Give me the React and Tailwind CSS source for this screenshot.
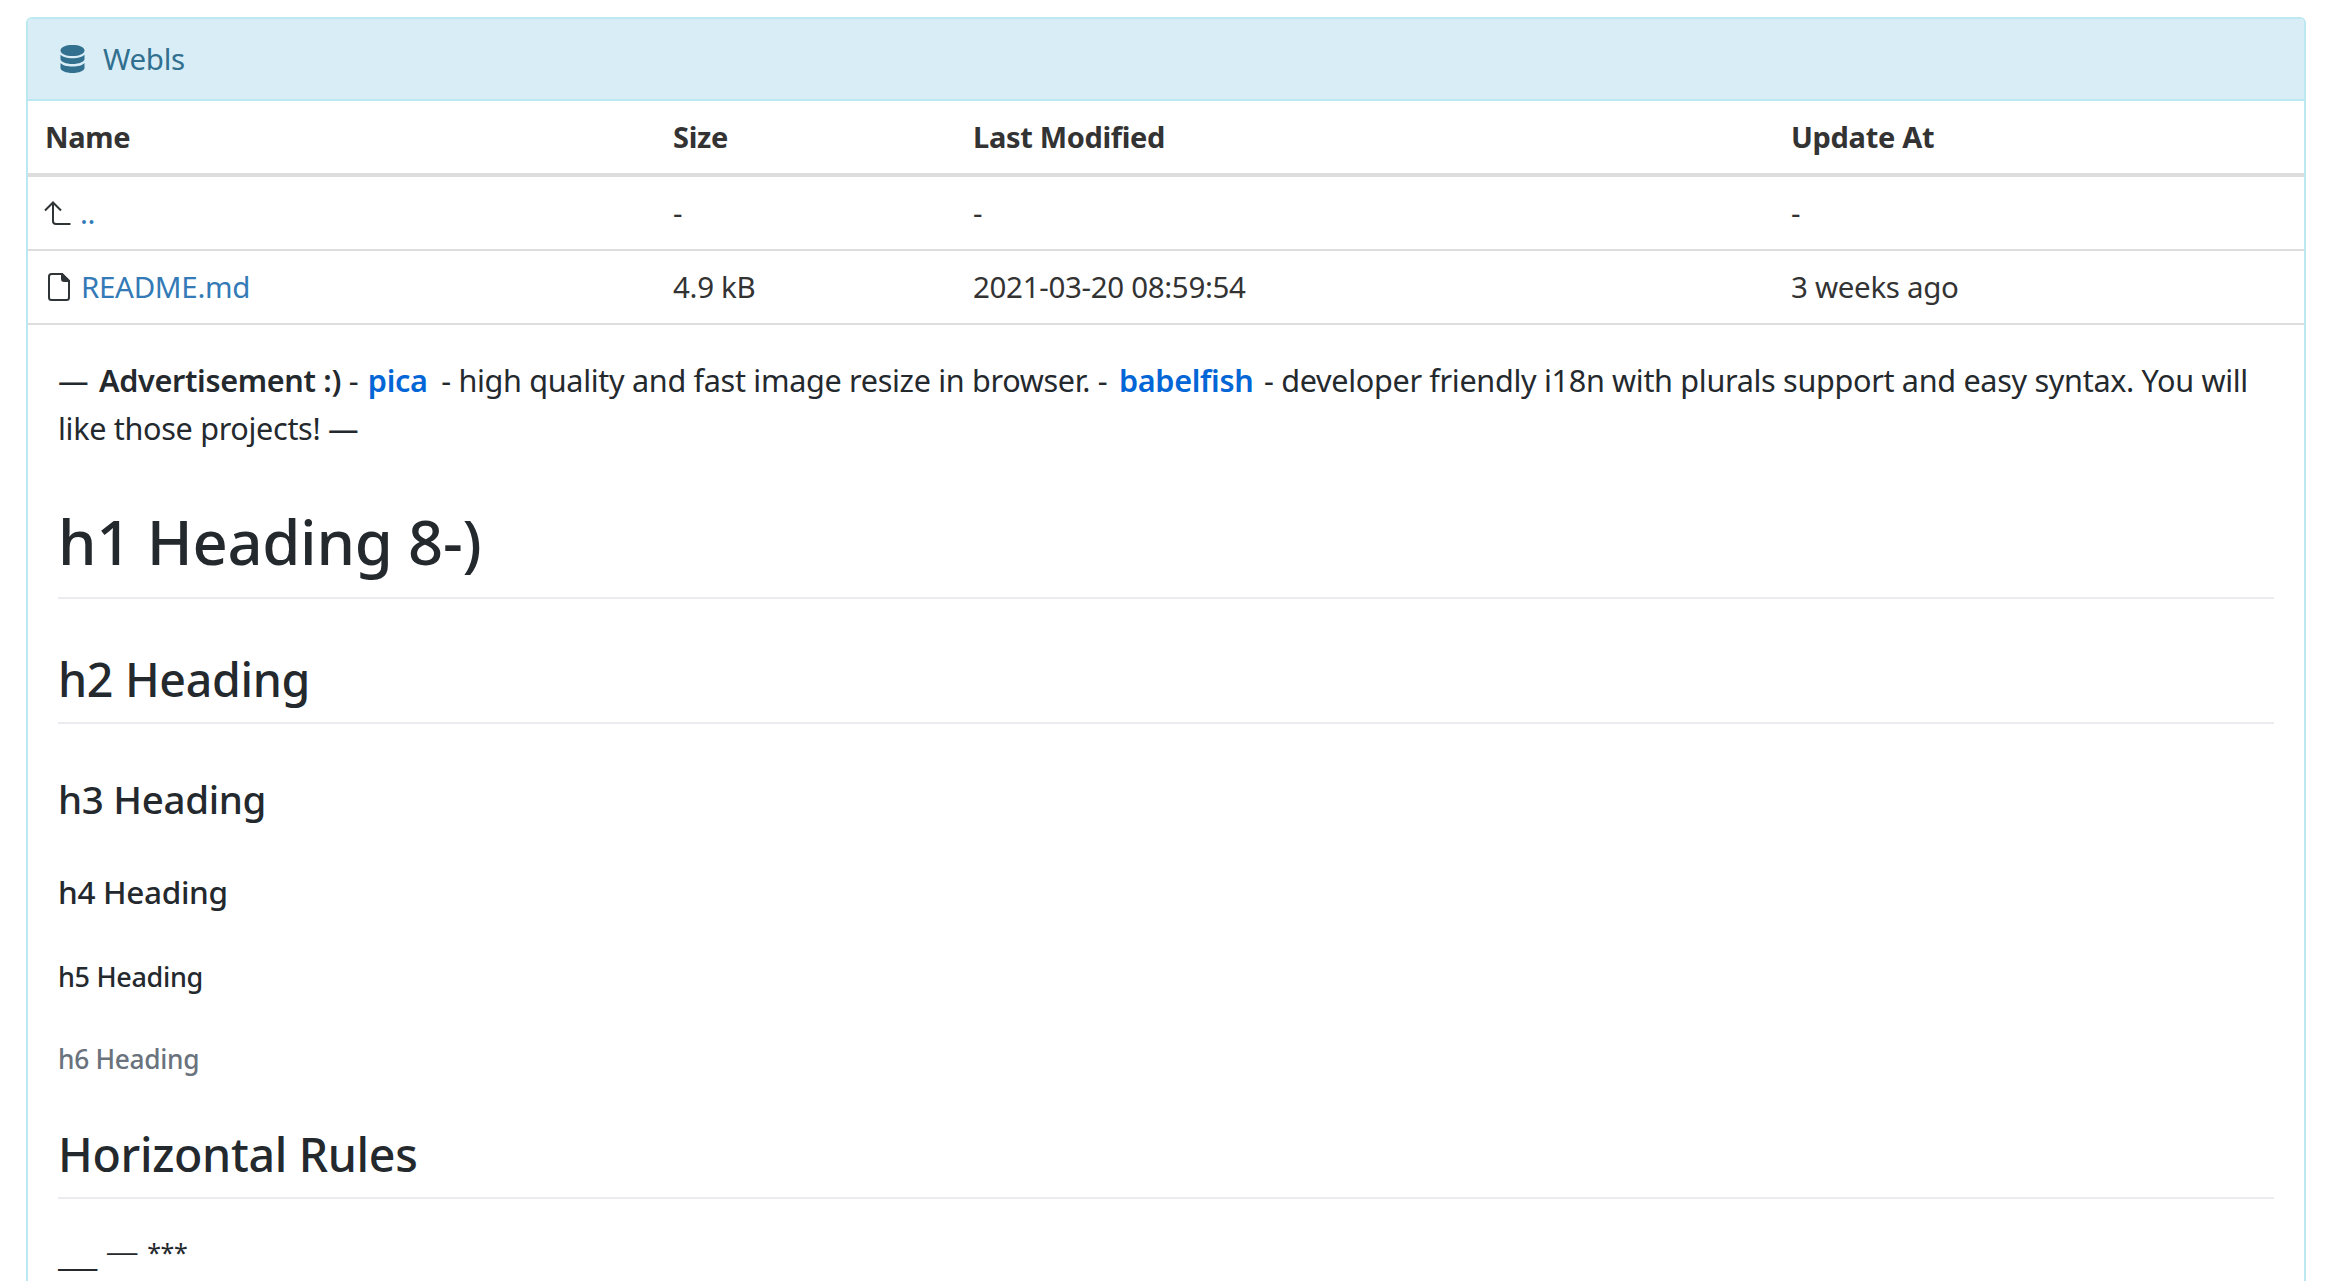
const F = { fontFamily: '"Noto Sans", sans-serif' };

function Db() {
  return (
    <svg width="25" height="28" viewBox="0 0 25 28" fill="#31708f">
      <path d="M12.500 0C19 0 24.500 2 24.500 5.500S19 11 12.500 11 .5 9 .5 5.500 6 0 12.500 0Z" />
      <path d="M.5 9.500C2.500 12 7 13.200 12.500 13.200S22.500 12 24.500 9.500V14c0 2.800-5.500 5-12 5S.5 16.800.5 14Z" />
      <path d="M.5 18C2.500 20.500 7 21.500 12.500 21.500S22.500 20.500 24.500 18v5c0 2.800-5.500 5-12 5S.5 25.800.5 23Z" />
    </svg>
  );
}
function Up() {
  return (
    <svg width="27" height="24" viewBox="0 0 27 24" fill="none" stroke="#2f3437" strokeWidth="2">
      <path d="M1 9.500 9 1.500 17 9.500" />
      <path d="M9 2V20Q9 23 12 23H26.500" />
    </svg>
  );
}
function FileIco() {
  return (
    <svg width="22" height="28" viewBox="0 0 22 28" fill="none" stroke="#2f3437" strokeWidth="2">
      <path d="M3.500 1H14L21 8V24.500Q21 27 18.500 27H3.500Q1 27 1 24.500V3.500Q1 1 3.500 1Z" />
      <path d="M14 1 21 8H16Q14 8 14 6Z" fill="#2f3437" />
    </svg>
  );
}
const colClass = "grid grid-cols-[628px_300px_818px_1fr]";
function Row({ cells, className }) {
  return (
    <div className={`${colClass} ${className}`}>
      {cells.map((c, i) => (
        <div key={i} className="pl-[17px] flex items-center">{c}</div>
      ))}
    </div>
  );
}

export default function App() {
  return (
    <div className="bg-white pt-[17px] px-[26px] h-[1281px] overflow-hidden text-[#333] tracking-[-0.02em]" style={F}>
      <div className="border-2 border-[#bce8f1] rounded-t-[6px] h-[1400px] w-[2280px]">
        <div className="h-[80px] bg-[#d9edf7] text-[#31708f] flex items-center pl-[32px] gap-[18px] text-[29.500px] border-b-2 border-[#bce8f1] box-content rounded-t-[4px]">
          <Db />
          <span>Webls</span>
        </div>
        <Row className="h-[72px] border-b-[4px] border-[#ddd] box-content text-[29px] font-bold" cells={["Name", "Size", "Last Modified", "Update At"]} />
        <Row
          className="h-[72px] border-b-2 border-[#ddd] box-content text-[29.500px]"
          cells={[
            <span className="flex items-center"><span className="w-[36px] -ml-px flex"><Up /></span><span className="text-[#337ab7]">..</span></span>,
            "-", "-", "-",
          ]}
        />
        <Row
          className="h-[72px] border-b-2 border-[#ddd] box-content text-[29.500px]"
          cells={[
            <span className="flex items-center"><span className="w-[33px] ml-[3px] flex"><FileIco /></span><span className="text-[#337ab7]">README.md</span></span>,
            "4.9 kB", "2021-03-20 08:59:54", "3 weeks ago",
          ]}
        />
        <div className="pl-[30px] pr-[30px] text-[#24292e]">
          <p className="text-[30.600px] leading-[48px] mt-[31px]">
            — <strong className="font-semibold ml-[3px]">Advertisement :)</strong> - <a className="text-[#0366d6] font-semibold ml-[2px]">pica</a> <span className="ml-[6px]">- high quality and fast image resize in browser. - </span><a className="text-[#0366d6] font-semibold ml-[4px]">babelfish</a> <span className="ml-[3px]">- developer friendly i18n with plurals support and easy syntax. You will like those projects! —</span>
          </p>
          <h1 className="text-[61.500px] font-medium leading-[72px] mt-[53px] pb-[20px] border-b-2 border-[#eaecef]">h1 Heading 8-)</h1>
          <h2 className="text-[46.500px] font-medium leading-[60px] mt-[50px] pb-[13px] border-b-2 border-[#eaecef]">h2 Heading</h2>
          <h3 className="text-[38.500px] font-medium leading-[48px] mt-[51px]">h3 Heading</h3>
          <h4 className="text-[31.500px] font-medium leading-[38px] mt-[50px]">h4 Heading</h4>
          <h5 className="text-[27px] font-medium leading-[32px] mt-[50px]">h5 Heading</h5>
          <h6 className="text-[26.300px] font-medium leading-[32px] mt-[50px] text-[#6a737d]">h6 Heading</h6>
          <h2 className="text-[46.500px] font-medium leading-[60px] mt-[49px] pb-[13px] border-b-2 border-[#eaecef]">Horizontal Rules</h2>
          <p className="text-[30px] leading-[48px] mt-[28px]">
            <span className="align-[-4px] leading-[0px]">___</span>
            <span className="ml-[10px] text-[24.500px] font-semibold align-[11px] leading-[0px]">___</span>
            <span className="ml-[10px] text-[25px] leading-[0px]">***</span>
          </p>
        </div>
      </div>
    </div>
  );
}
